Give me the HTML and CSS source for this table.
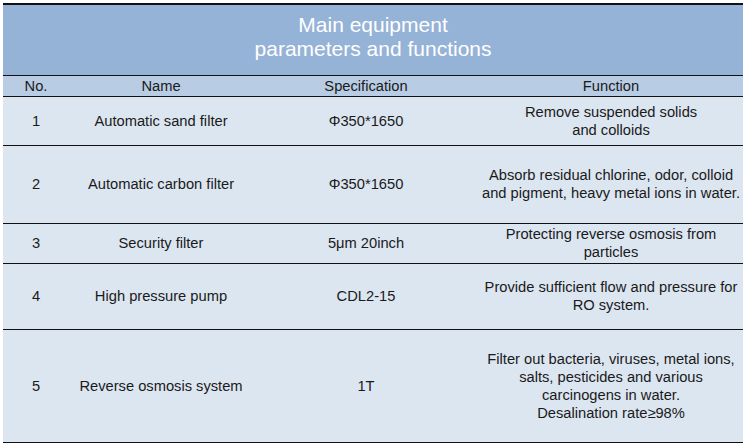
FILE: index.html
```html
<!DOCTYPE html>
<html>
<head>
<meta charset="utf-8">
<link rel="stylesheet" href="styles.css">
</head>
<body>
<table class="equip">
  <colgroup>
    <col class="c-no">
    <col class="c-name">
    <col class="c-spec">
    <col class="c-func">
  </colgroup>
  <thead>
    <tr class="title-row">
      <th colspan="4" class="title">Main equipment<br>parameters and functions</th>
    </tr>
    <tr class="head-row">
      <th>No.</th>
      <th>Name</th>
      <th>Specification</th>
      <th>Function</th>
    </tr>
  </thead>
  <tbody>
    <tr class="r1">
      <td>1</td>
      <td>Automatic sand filter</td>
      <td>Φ350*1650</td>
      <td>Remove suspended solids<br>and colloids</td>
    </tr>
    <tr class="r2">
      <td>2</td>
      <td>Automatic carbon filter</td>
      <td>Φ350*1650</td>
      <td>Absorb residual chlorine, odor, colloid<br>and pigment, heavy metal ions in water.</td>
    </tr>
    <tr class="r3">
      <td>3</td>
      <td>Security filter</td>
      <td>5μm 20inch</td>
      <td>Protecting reverse osmosis from<br>particles</td>
    </tr>
    <tr class="r4">
      <td>4</td>
      <td>High pressure pump</td>
      <td>CDL2-15</td>
      <td>Provide sufficient flow and pressure for<br>RO system.</td>
    </tr>
    <tr class="r5">
      <td>5</td>
      <td>Reverse osmosis system</td>
      <td>1T</td>
      <td>Filter out bacteria, viruses, metal ions,<br>salts, pesticides and various<br>carcinogens in water.<br>Desalination rate≥98%</td>
    </tr>
  </tbody>
</table>
</body>
</html>
```
FILE: styles.css
```css
html, body {
  margin: 0;
  padding: 0;
  background: #ffffff;
}
body {
  padding: 3px 0 0 3px;
  font-family: "Liberation Sans", Arial, "Noto Sans CJK SC", sans-serif;
  color: #1a1a1a;
}
.equip {
  width: 740px;
  border-collapse: separate;
  border-spacing: 0;
  table-layout: fixed;
  font-size: 14.7px;
  line-height: 18px;
}
.c-no { width: 66px; }
.c-name { width: 184px; }
.c-spec { width: 226px; }
.c-func { width: 264px; }

.equip th, .equip td {
  padding: 0 0 1px 0;
  text-align: center;
  vertical-align: middle;
  font-weight: normal;
  border-bottom: 1px solid #111111;
}
.title {
  background: #95b3d7;
  color: #ffffff;
  font-size: 21px;
  line-height: 24.5px;
  border-top: 2px solid #111111;
  height: 64px;
  padding-bottom: 6px !important;
}
.head-row th {
  background: #b8cce4;
  height: 19px;
}
.equip tbody td {
  background: #dce6f1;
}
.r1 td { height: 47px; }
.r2 td { height: 76px; }
.r3 td { height: 38px; }
.r4 td { height: 64px; }
.r5 td { height: 111px; }
```
